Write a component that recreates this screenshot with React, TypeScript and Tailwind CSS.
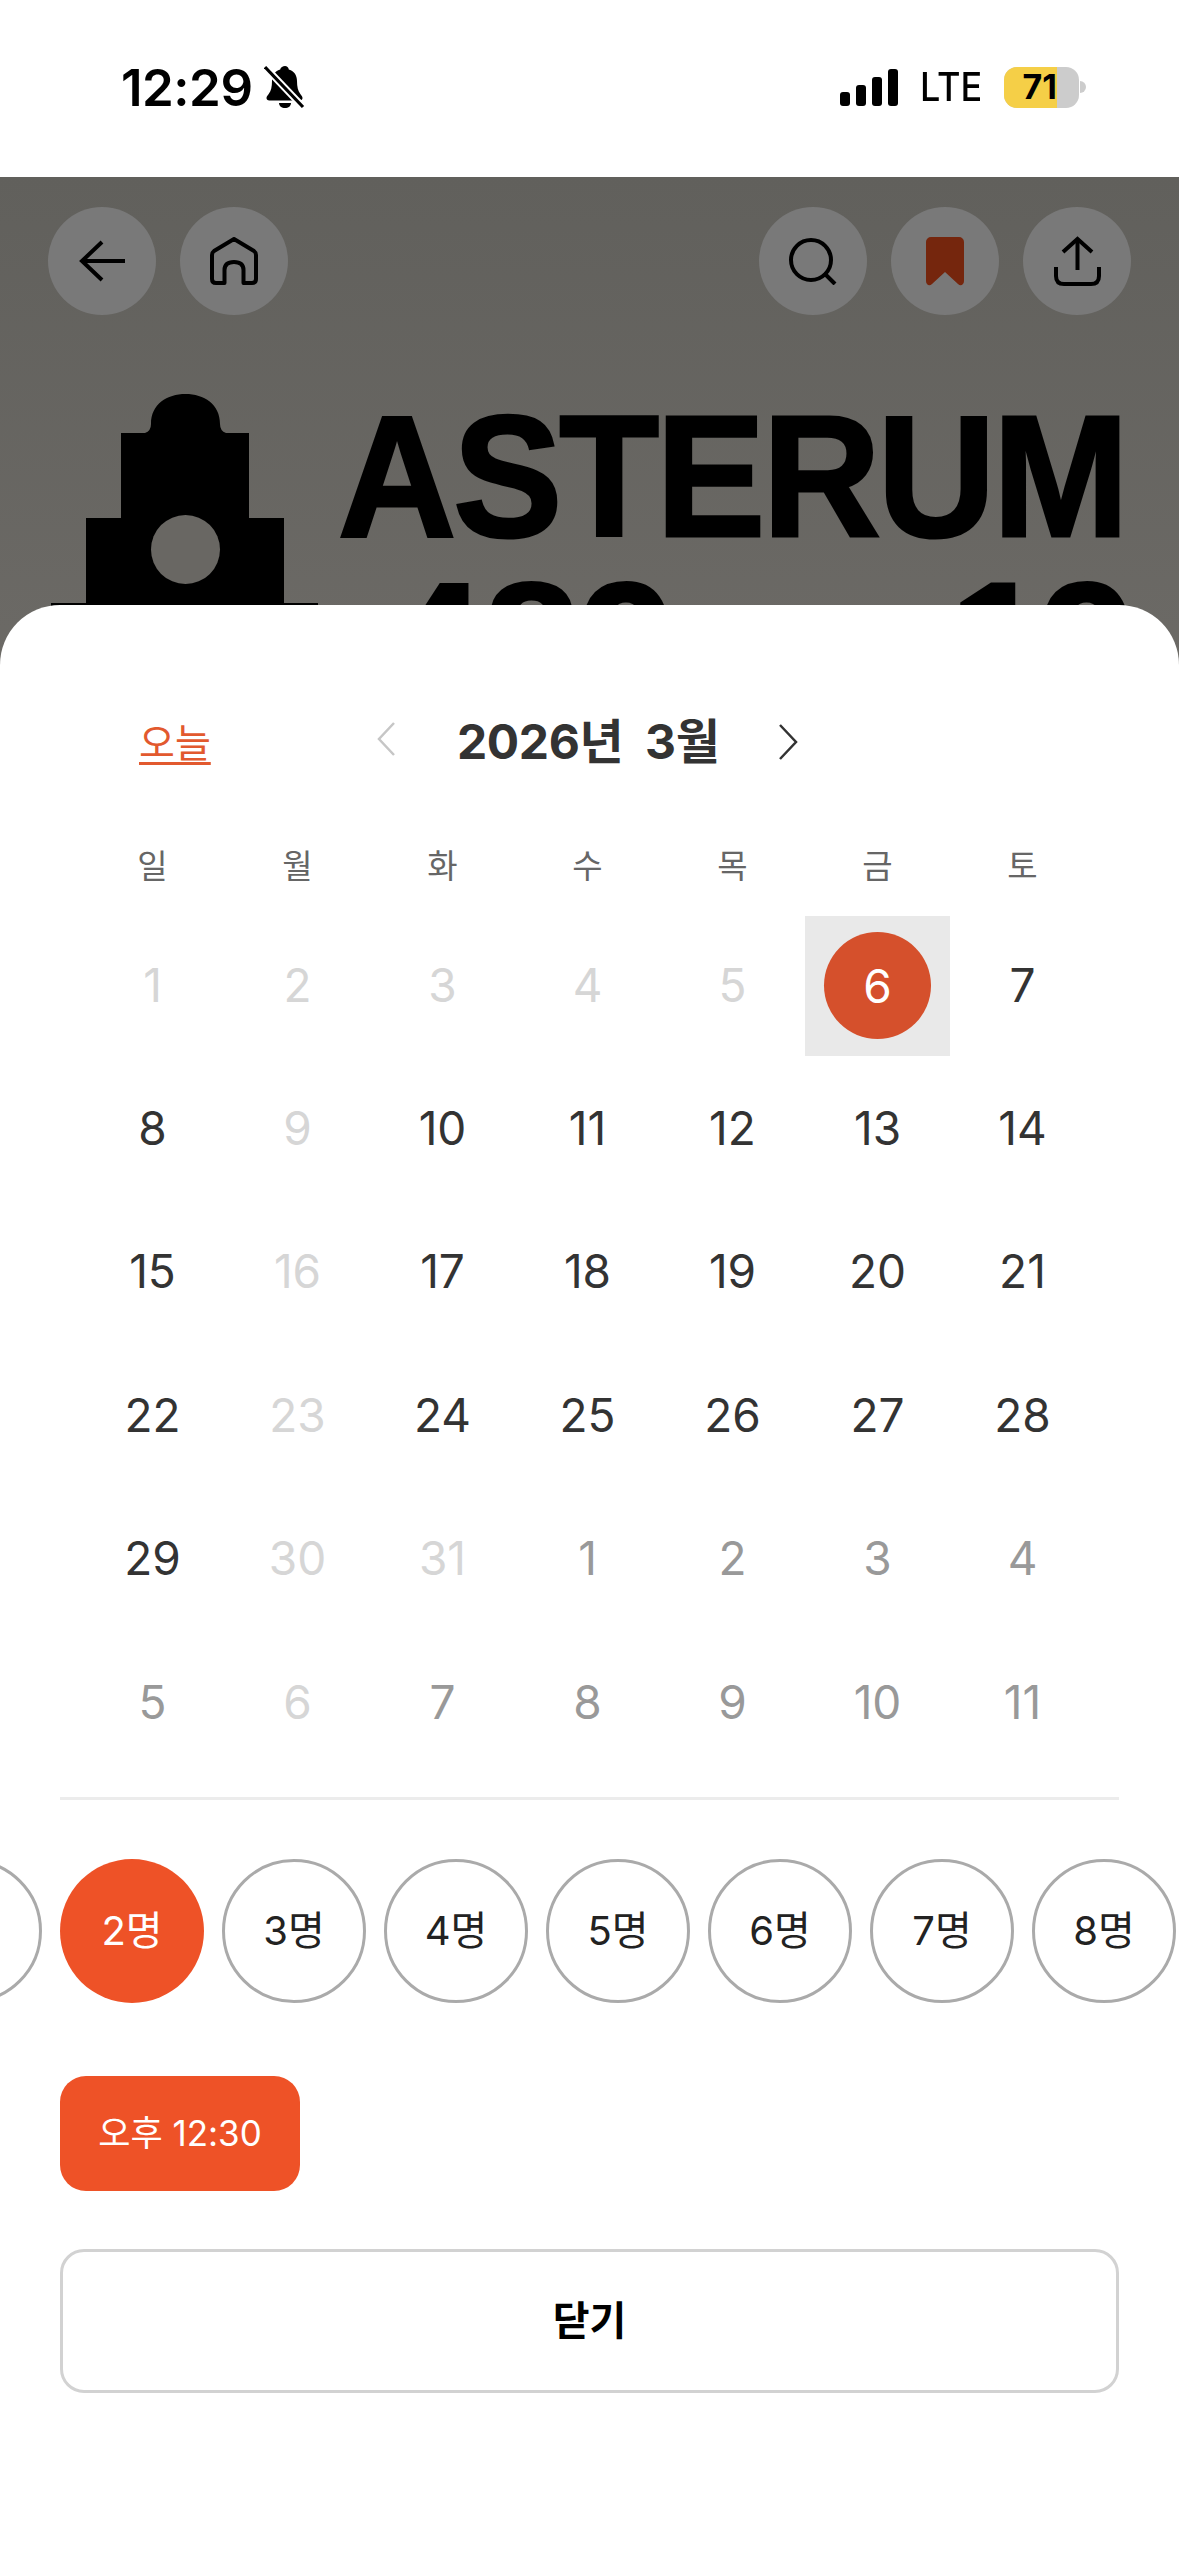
type DayTone = "past" | "off" | "on" | "next";

interface Day {
  label: number;
  tone: DayTone;
  selected?: boolean;
}

const WEEKDAYS = ["일", "월", "화", "수", "목", "금", "토"];

const DAY_TONES: Record<DayTone, string> = {
  past: "text-[#d6d6d6]",
  off: "text-[#d6d6d6]",
  on: "text-[#333333]",
  next: "text-[#999999]",
};

const d = (label: number, tone: DayTone, selected = false): Day => ({ label, tone, selected });

const WEEKS: Day[][] = [
  [d(1, "past"), d(2, "past"), d(3, "past"), d(4, "past"), d(5, "past"), d(6, "on", true), d(7, "on")],
  [d(8, "on"), d(9, "off"), d(10, "on"), d(11, "on"), d(12, "on"), d(13, "on"), d(14, "on")],
  [d(15, "on"), d(16, "off"), d(17, "on"), d(18, "on"), d(19, "on"), d(20, "on"), d(21, "on")],
  [d(22, "on"), d(23, "off"), d(24, "on"), d(25, "on"), d(26, "on"), d(27, "on"), d(28, "on")],
  [d(29, "on"), d(30, "off"), d(31, "off"), d(1, "next"), d(2, "next"), d(3, "next"), d(4, "next")],
  [d(5, "next"), d(6, "off"), d(7, "next"), d(8, "next"), d(9, "next"), d(10, "next"), d(11, "next")],
];

const PARTY_SIZES = [1, 2, 3, 4, 5, 6, 7, 8, 9];

function StatusBar() {
  return (
    <div className="h-[177px] bg-white flex items-center justify-between pl-[121px] pr-[93px] pb-[3px]">
      <div className="flex items-center gap-[11px]">
        <span className="text-[51px] leading-none font-semibold text-black tracking-[-0.5px]">12:29</span>
        <svg width="42" height="44" viewBox="0 0 42 44" className="text-black">
          <path
            d="M21 1c2 0 3.500 1.500 3.800 3.400C30.500 6 33 10.500 33 16c0 6 1 9.500 3 12.500 1.500 2.300 2.500 3.200 2.500 4.500 0 1.500-1 2.500-2.800 2.500H5.300C3.500 35.500 2.500 34.500 2.500 33c0-1.300 1-2.200 2.500-4.500C7 25.500 8 22 8 16c0-5.500 2.500-10 8.200-11.600C16.500 2.500 19 1 21 1z"
            fill="currentColor"
          />
          <path d="M15 38h12c0 3-2.700 5-6 5s-6-2-6-5z" fill="currentColor" />
          <path d="M1 2l38 40" stroke="#fff" strokeWidth="7" />
          <path d="M1 2l38 40" stroke="currentColor" strokeWidth="3.200" />
        </svg>
      </div>
      <div className="flex items-center">
        <div className="flex items-end gap-[6px] h-[37px]">
          <span className="w-[10px] h-[14px] rounded-[3px] bg-black" />
          <span className="w-[10px] h-[21px] rounded-[3px] bg-black" />
          <span className="w-[10px] h-[29px] rounded-[3px] bg-black" />
          <span className="w-[10px] h-[37px] rounded-[3px] bg-black" />
        </div>
        <div className="ml-[22px] w-[60px]">
          <span className="block origin-left scale-x-[0.9] text-[40px] leading-none font-medium text-black">LTE</span>
        </div>
        <div className="ml-[24px] w-[75px] h-[41px] rounded-[13px] overflow-hidden flex bg-[#cccccc]">
          <div className="w-[53px] h-full bg-[#f5cf47] flex items-center justify-end">
            <span className="text-[34px] leading-none font-bold text-black">71</span>
          </div>
        </div>
        <div className="ml-[1px] w-[6px] h-[12px] rounded-r-full bg-[#cccccc]" />
      </div>
    </div>
  );
}

function RoundButton({ children }: { children: React.ReactNode }) {
  return (
    <div className="w-[108px] h-[108px] rounded-full bg-[#797979] flex items-center justify-center">
      {children}
    </div>
  );
}

function Hero() {
  return (
    <div className="relative h-[500px] overflow-hidden bg-gradient-to-b from-[#61605c] to-[#6c6a66]">
      {/* poster behind the dimmed layer */}
      <svg width="267" height="215" viewBox="0 0 267 215" className="absolute left-[51px] top-[217px] text-black">
        <path
          d="M70 39H94Q100 37 100 30C100 10 116 0 134.500 0C153 0 169 10 169 30Q169 37 175 39H198V124H233V215H35V124H70Z"
          fill="currentColor"
        />
        <ellipse cx="134.500" cy="155.500" rx="34.500" ry="34.500" fill="#696763" />
        <rect x="0" y="209" width="267" height="6" fill="currentColor" />
      </svg>
      <span className="absolute left-[338px] top-[234px] origin-left scale-x-[0.95] font-['Liberation_Sans',sans-serif] text-[172px] leading-[130px] font-bold tracking-[-3px] text-black [-webkit-text-stroke:3px_black] blur-[0.6px]">
        ASTERUM
      </span>
      <span className="absolute left-[388px] top-[401px] font-['Liberation_Sans',sans-serif] text-[172px] leading-[130px] font-bold text-black [-webkit-text-stroke:3px_black] blur-[0.6px]">
        489
      </span>
      <span className="absolute left-[950px] top-[401px] font-['Liberation_Sans',sans-serif] text-[172px] leading-[130px] font-bold tracking-[-6px] text-black [-webkit-text-stroke:3px_black] blur-[0.6px]">
        19
      </span>

      <div className="relative flex justify-between px-[48px] pt-[30px]">
        <div className="flex gap-[24px]">
          <RoundButton>
            <svg width="46" height="42" viewBox="0 0 46 42" fill="none" stroke="#000" strokeWidth="4">
              <path d="M46 21H4" />
              <path d="M23 2L3 21L23 40" />
            </svg>
          </RoundButton>
          <RoundButton>
            <svg width="48" height="48" viewBox="0 0 48 48" fill="none" stroke="#000" strokeWidth="4" strokeLinejoin="round">
              <path d="M24 2L44 14Q46 15.500 46 18V42Q46 46 42 46H33.500V33Q33.500 25 24 25Q14.500 25 14.500 33V46H6Q2 46 2 42V18Q2 15.500 4 14Z" />
            </svg>
          </RoundButton>
        </div>
        <div className="flex gap-[24px]">
          <RoundButton>
            <svg width="48" height="47" viewBox="0 0 48 47" fill="none" stroke="#000" strokeWidth="4">
              <circle cx="22" cy="22" r="20" />
              <path d="M35 35L46 46" />
            </svg>
          </RoundButton>
          <RoundButton>
            <svg width="38" height="49" viewBox="0 0 38 49">
              <path d="M5 0H33a5 5 0 0 1 5 5V44c0 4-3.500 5.500-6 3L19 35 6 47c-2.500 2.500-6 1-6-3V5a5 5 0 0 1 5-5z" fill="#75260d" />
            </svg>
          </RoundButton>
          <RoundButton>
            <svg width="47" height="50" viewBox="0 0 47 50" fill="none" stroke="#000" strokeWidth="4">
              <path d="M23.500 34V3" />
              <path d="M9 16L23.500 3L38 16" />
              <path d="M2 31V40Q2 48 10 48H37Q45 48 45 40V31" />
            </svg>
          </RoundButton>
        </div>
      </div>
    </div>
  );
}

function MonthHeader() {
  return (
    <div className="flex items-center h-[60px] mt-[107px] pl-[139px]">
      <span className="w-[72px] text-[#e2592e] text-[39px] leading-none underline underline-offset-[5px] decoration-[3px] whitespace-nowrap">
        오늘
      </span>
      <svg width="22" height="36" viewBox="0 0 22 36" fill="none" stroke="#c6c6c6" strokeWidth="2.500" className="ml-[164px] -mt-[6px]">
        <path d="M19 2L4 18L19 34" />
      </svg>
      <span className="ml-[60px] w-[264px] text-[48px] leading-none font-bold text-[#333333] whitespace-pre tracking-[-0.4px]">
        2026년  3월
      </span>
      <svg width="22" height="38" viewBox="0 0 22 38" fill="none" stroke="#333333" strokeWidth="2.500" className="ml-[56px]">
        <path d="M3 2L19 19L3 36" />
      </svg>
    </div>
  );
}

function Calendar() {
  return (
    <div className="pl-[80px] pr-[84px]">
      <div className="grid grid-cols-7 h-[80px] mt-[54px] items-center">
        {WEEKDAYS.map((w) => (
          <div key={w} className="text-center text-[33px] leading-none text-[#666666]">
            {w}
          </div>
        ))}
      </div>
      <div className="mt-[8px]">
        {WEEKS.map((week, i) => (
          <div key={i} className="grid grid-cols-7 h-[143.400px]">
            {week.map((day, j) => (
              <div key={j} className="flex items-center justify-center">
                {day.selected ? (
                  <div className="w-[145px] h-[140px] bg-[#e9e9e9] flex items-center justify-center">
                    <div className="w-[107px] h-[107px] rounded-full bg-[#d5502c] flex items-center justify-center text-white text-[46px] leading-none">
                      {day.label}
                    </div>
                  </div>
                ) : (
                  <span className={`-mt-[2px] text-[46px] leading-none ${DAY_TONES[day.tone]}`}>{day.label}</span>
                )}
              </div>
            ))}
          </div>
        ))}
      </div>
    </div>
  );
}

function PartySizes() {
  return (
    <div className="flex gap-[18px] overflow-hidden mt-[59px] ml-[-102px] w-[1281px]">
      {PARTY_SIZES.map((n) =>
        n === 2 ? (
          <div
            key={n}
            className="w-[144px] h-[144px] shrink-0 rounded-full bg-[#ee5227] text-white flex items-center justify-center text-[40px] leading-none"
          >
            {n}명
          </div>
        ) : (
          <div
            key={n}
            className="w-[144px] h-[144px] shrink-0 rounded-full border-[3px] border-[#aaaaaa] text-[#222222] flex items-center justify-center text-[40px] leading-none"
          >
            {n}명
          </div>
        ),
      )}
    </div>
  );
}

export default function App() {
  return (
    <div className="w-[1179px] h-[2556px] bg-white overflow-hidden font-['Inter','Noto_Sans_CJK_KR',sans-serif]">
      <StatusBar />
      <Hero />
      <div className="relative -mt-[72px] h-[1951px] bg-white rounded-t-[60px] overflow-hidden">
        <MonthHeader />
        <Calendar />
        <div className="mx-[60px] mt-[23px] h-[3px] bg-[#ececec]" />
        <PartySizes />
        <div className="ml-[60px] mt-[73px] w-[240px] h-[115px] rounded-[26px] bg-[#ee5227] text-white flex items-center justify-center text-[35px] leading-none whitespace-nowrap">
          오후 12:30
        </div>
        <div className="mx-[60px] mt-[58px] h-[144px] rounded-[24px] border-[3px] border-[#d2d2d2] flex items-center justify-center text-[40px] leading-none font-bold text-black">
          닫기
        </div>
      </div>
    </div>
  );
}
